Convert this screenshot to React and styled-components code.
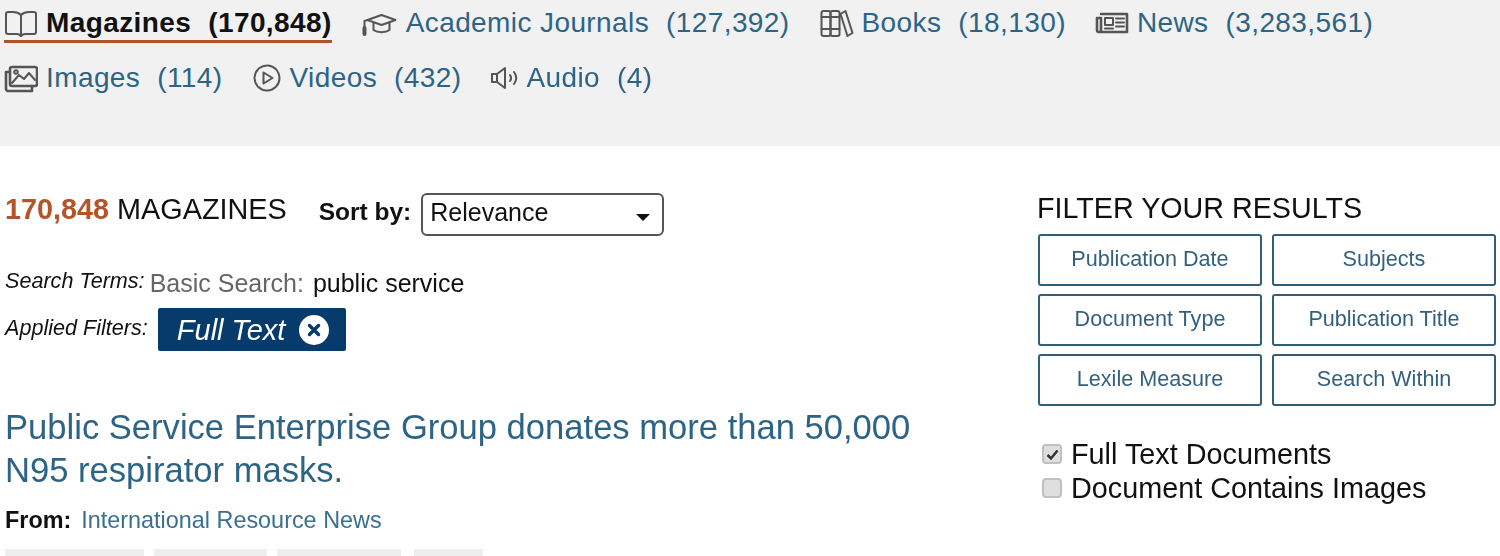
import React from 'react';
import styled, { createGlobalStyle } from 'styled-components';

const GlobalStyle = createGlobalStyle`
  html, body {
    margin: 0;
    padding: 0;
    background: #fff;
    overflow: hidden;
  }
  body {
    font-family: "Liberation Sans", Arial, sans-serif;
    color: #111;
  }
`;

const Page = styled.div`
  width: 1500px;
  height: 556px;
  overflow: hidden;
  filter: blur(0.55px);
`;

const TabBar = styled.nav`
  height: 146px;
  box-sizing: border-box;
  background: #f1f1f1;
  padding: 6px 0 0 4px;
`;

const TabRow = styled.div`
  display: flex;
  align-items: flex-start;
  height: 55px;
  gap: 29px;
`;

const Tab = styled.a`
  display: flex;
  align-items: center;
  gap: 8px;
  height: 34px;
  font-size: 28px;
  letter-spacing: 0.4px;
  line-height: 34px;
  color: ${(p) => (p.$active ? '#111' : '#2d6486')};
  font-weight: ${(p) => (p.$active ? 700 : 400)};
  border-bottom: 3px solid ${(p) => (p.$active ? '#ad5526' : 'transparent')};
  svg {
    flex: none;
    width: ${(p) => p.$iconSize || 34}px;
    height: 30px;
    fill: none;
    stroke: #555;
    stroke-width: 2;
    stroke-linejoin: round;
    stroke-linecap: round;
  }
`;

const Count = styled.span`
  margin-left: 17px;
`;

const Main = styled.main`
  display: flex;
  padding: 40px 4px 0 5px;
`;

const Results = styled.section`
  width: 1032px;
  flex: none;
  padding-top: 6px;
`;

const CountRow = styled.div`
  display: flex;
  align-items: center;
  height: 44px;
`;

const Total = styled.h2`
  margin: 0 0 10px;
  font-size: 28.8px;
  font-weight: 400;
  color: #111;
  white-space: nowrap;
  b {
    color: #b3542a;
  }
`;

const SortLabel = styled.label`
  margin: 0 0 4px 32px;
  font-size: 24.5px;
  font-weight: 700;
`;

const SortBox = styled.div`
  position: relative;
  box-sizing: border-box;
  width: 243px;
  height: 43px;
  margin-left: 10px;
  padding: 0 7px;
  border: 2px solid #555;
  border-radius: 6px;
  font-size: 25px;
  line-height: 34px;
  &::after {
    content: '';
    position: absolute;
    right: 12px;
    top: 19px;
    border: 7px solid transparent;
    border-top-color: #111;
    border-bottom-width: 0;
  }
`;

const TermRow = styled.div`
  display: flex;
  align-items: center;
  margin-top: ${(p) => p.$top || 0}px;
  font-size: 25px;
  line-height: 34px;
`;

const TermLabel = styled.span`
  margin: 0 5px 4px 0;
  font-size: 21.6px;
  font-style: italic;
  white-space: nowrap;
`;

const Muted = styled.span`
  color: #666;
  margin-right: 9px;
`;

const Chip = styled.span`
  display: inline-flex;
  align-items: center;
  gap: 14px;
  box-sizing: border-box;
  width: 188px;
  height: 43px;
  margin-left: 5px;
  padding-left: 19px;
  background: #073b6c;
  border-radius: 2px;
  color: #fff;
  font-size: 29px;
  font-style: italic;
`;

const ChipClose = styled.svg`
  width: 30px;
  height: 30px;
`;

const Title = styled.h3`
  width: 930px;
  margin: 55px 0 0;
  font-size: 34.6px;
  line-height: 43px;
  font-weight: 400;
  color: #2d6486;
`;

const Source = styled.div`
  margin-top: 14px;
  font-size: 23.4px;
  line-height: 28px;
  b {
    margin-right: 10px;
  }
  a {
    color: #3a6f90;
  }
`;

const TagRow = styled.div`
  display: flex;
  gap: 10px;
  margin-top: 15px;
`;

const Tag = styled.span`
  width: ${(p) => p.$w}px;
  height: 20px;
  background: #eeeeee;
  &:last-child {
    margin-left: 3px;
  }
`;

const Filters = styled.aside`
  flex: 1;
`;

const FilterTitle = styled.h2`
  margin: 0;
  height: 44px;
  font-size: 28.7px;
  line-height: 44px;
  font-weight: 400;
  color: #111;
  white-space: nowrap;
`;

const FilterGrid = styled.div`
  display: grid;
  grid-template-columns: 224px 224px;
  grid-auto-rows: 52px;
  gap: 8px 10px;
  margin: 4px 0 0 1px;
`;

const FilterButton = styled.button`
  border: 2px solid #2f6077;
  border-radius: 3px;
  background: #fff;
  padding: 0 0 2px;
  font-family: inherit;
  font-size: 21.6px;
  color: #33607f;
`;

const CheckList = styled.div`
  margin: 31px 0 0 5px;
`;

const CheckRow = styled.label`
  display: flex;
  align-items: center;
  gap: 9px;
  height: 34px;
  font-size: 28.8px;
  color: #111;
`;

const CheckBox = styled.span`
  display: flex;
  align-items: center;
  justify-content: center;
  box-sizing: border-box;
  width: 20px;
  height: 20px;
  background: #dedede;
  border: 2px solid #c0c0c0;
  border-radius: 4px;
  svg {
    width: 15px;
    height: 15px;
  }
`;

const BookIcon = () => (
  <svg viewBox="0 0 34 30">
    <path d="M17 7C15 5 12 4 9 4H4C2.500 4 2 5 2 6V24C2 25 2.500 26 4 26H13C15 26 16 27 17 28C18 27 19 26 21 26H30C31.500 26 32 25 32 24V6C32 5 31.500 4 30 4H25C22 4 19 5 17 7Z" />
    <path d="M17 7V28" />
  </svg>
);

const CapIcon = () => (
  <svg viewBox="0 0 36 30">
    <path d="M6 12L20 7L34 12L20 17Z" />
    <path d="M12 15V22C16 25 24 25 28 22V15" />
    <path d="M6 12L3 13V21" />
    <path d="M3 20V26" strokeWidth="4" />
  </svg>
);

const ShelfIcon = () => (
  <svg viewBox="0 0 34 30">
    <rect x="2" y="3" width="9" height="25" rx="2" />
    <rect x="11" y="3" width="9" height="25" rx="2" />
    <path d="M2 9H20M2 21H20" />
    <path d="M21 6L26 3L33 25L28 28Z" />
  </svg>
);

const NewsIcon = () => (
  <svg viewBox="0 0 34 30">
    <path d="M6 6H32V24H4C2.500 24 2 23 2 22V10H6V23" strokeWidth="2.600" />
    <rect x="10" y="10" width="8" height="7" />
    <path d="M21 10.500H29M21 14.500H29M21 18.500H29M10 20.500H18" />
  </svg>
);

const PictureIcon = () => (
  <svg viewBox="0 0 34 30">
    <rect x="6" y="4" width="27" height="19" rx="2" strokeWidth="2.600" />
    <path d="M6 9H2V26C2 27 3 28 4 28H28V23" strokeWidth="2.600" />
    <path d="M8 20L15 12L20 16L25 10L31 17" />
    <circle cx="12" cy="9" r="1.800" />
  </svg>
);

const PlayIcon = () => (
  <svg viewBox="0 0 28 30">
    <circle cx="14" cy="15" r="12.500" strokeDasharray="9 1" />
    <path d="M10.500 9.500L19.500 15L10.500 20.500Z" />
  </svg>
);

const SpeakerIcon = () => (
  <svg viewBox="0 0 28 30">
    <path d="M2 11H7L15 5V25L7 19H2Z" />
    <path d="M7 11V19" />
    <path d="M20 12C21.500 14 21.500 16 20 18" />
    <path d="M24 9C27 13 27 17 24 21" />
  </svg>
);

const rows = [
  [
    { label: 'Magazines', count: '170,848', icon: <BookIcon />, active: true },
    { label: 'Academic Journals', count: '127,392', icon: <CapIcon />, iconSize: 37 },
    { label: 'Books', count: '18,130', icon: <ShelfIcon />, iconSize: 35 },
    { label: 'News', count: '3,283,561', icon: <NewsIcon /> },
  ],
  [
    { label: 'Images', count: '114', icon: <PictureIcon /> },
    { label: 'Videos', count: '432', icon: <PlayIcon />, iconSize: 30 },
    { label: 'Audio', count: '4', icon: <SpeakerIcon />, iconSize: 28 },
  ],
];

const filterNames = [
  'Publication Date',
  'Subjects',
  'Document Type',
  'Publication Title',
  'Lexile Measure',
  'Search Within',
];

const App = () => (
  <>
    <GlobalStyle />
    <Page>
      <TabBar>
        {rows.map((row) => (
          <TabRow key={row[0].label}>
            {row.map((tab) => (
              <Tab key={tab.label} $active={tab.active} $iconSize={tab.iconSize}>
                {tab.icon}
                <span>
                  {tab.label}
                  <Count>({tab.count})</Count>
                </span>
              </Tab>
            ))}
          </TabRow>
        ))}
      </TabBar>
      <Main>
        <Results>
          <CountRow>
            <Total>
              <b>170,848</b> MAGAZINES
            </Total>
            <SortLabel>Sort by:</SortLabel>
            <SortBox>Relevance</SortBox>
          </CountRow>
          <TermRow $top={28}>
            <TermLabel>Search Terms:</TermLabel>
            <Muted>Basic Search:</Muted>
            <span>public service</span>
          </TermRow>
          <TermRow $top={6}>
            <TermLabel>Applied Filters:</TermLabel>
            <Chip>
              Full Text
              <ChipClose viewBox="0 0 30 30">
                <circle cx="15" cy="15" r="15" fill="#fff" />
                <path d="M10.500 10.500L19.500 19.500M19.500 10.500L10.500 19.500" stroke="#073b6c" strokeWidth="3.500" strokeLinecap="round" />
              </ChipClose>
            </Chip>
          </TermRow>
          <Title>Public Service Enterprise Group donates more than 50,000 N95 respirator masks.</Title>
          <Source>
            <b>From:</b>
            <a>International Resource News</a>
          </Source>
          <TagRow>
            <Tag $w={139} />
            <Tag $w={113} />
            <Tag $w={124} />
            <Tag $w={69} />
          </TagRow>
        </Results>
        <Filters>
          <FilterTitle>FILTER YOUR RESULTS</FilterTitle>
          <FilterGrid>
            {filterNames.map((name) => (
              <FilterButton key={name}>{name}</FilterButton>
            ))}
          </FilterGrid>
          <CheckList>
            <CheckRow>
              <CheckBox>
                <svg viewBox="0 0 15 15">
                  <path d="M2.500 8L6 11.500L12.500 3.500" fill="none" stroke="#333" strokeWidth="2.500" />
                </svg>
              </CheckBox>
              Full Text Documents
            </CheckRow>
            <CheckRow>
              <CheckBox />
              Document Contains Images
            </CheckRow>
          </CheckList>
        </Filters>
      </Main>
    </Page>
  </>
);

export default App;
